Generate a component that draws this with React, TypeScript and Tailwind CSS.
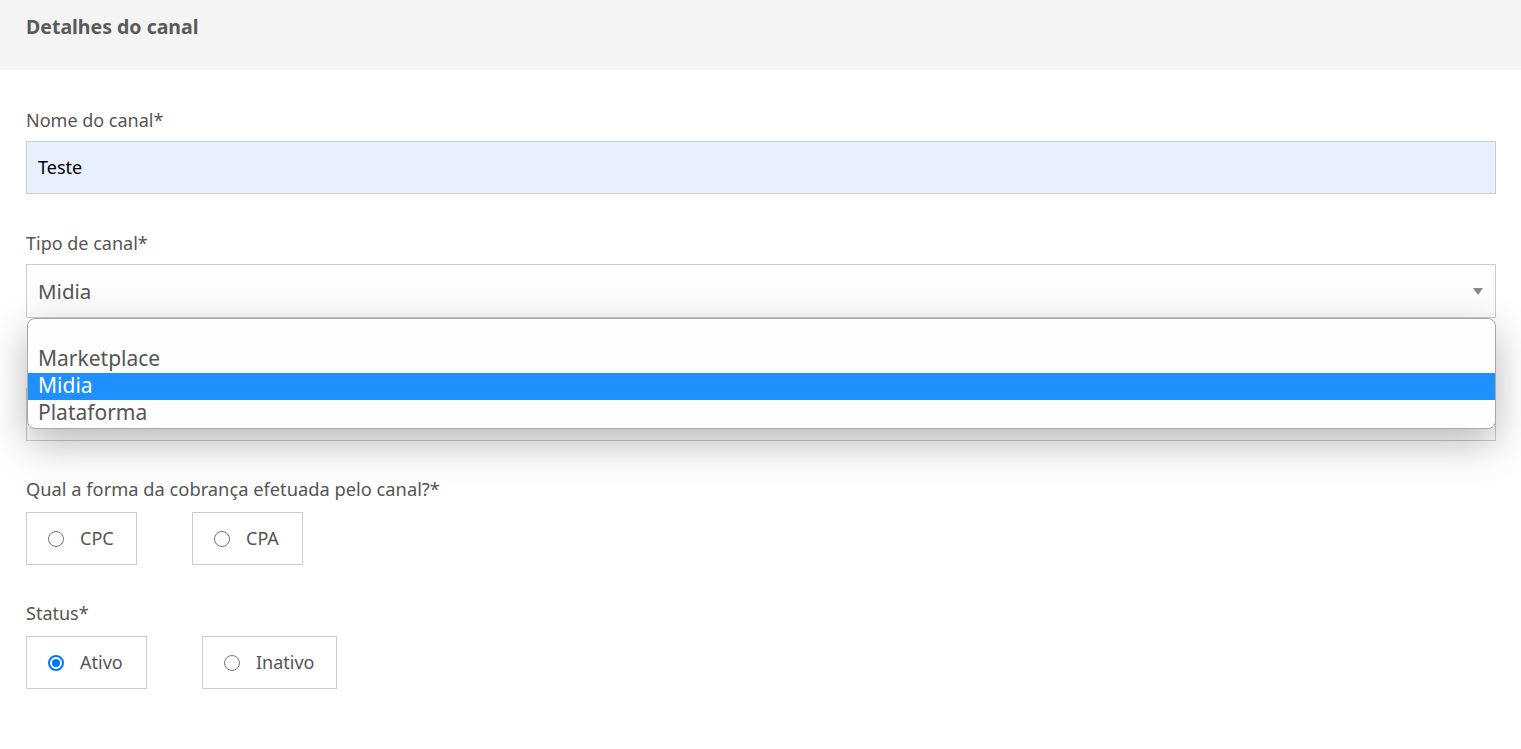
import { useState } from 'react';

const font = { fontFamily: '"Noto Sans", "Open Sans", sans-serif' };

function RadioBox({ label, checked, width }: { label: string; checked?: boolean; width: string }) {
    return (
        <label className={`flex h-[53px] items-center gap-[16px] border border-[#cccccc] pl-[21px] ${width}`}>
            <span
                className={`flex h-[16px] w-[16px] items-center justify-center rounded-full ${checked ? 'border-2 border-[#0075ff]' : 'border border-[#767676]'}`}
            >
                {checked && <span className="h-[8px] w-[8px] rounded-full bg-[#0075ff]" />}
            </span>
            <span className="text-[18px] text-[#555555]">{label}</span>
        </label>
    );
}

export default function App() {
    const [tipo] = useState('Midia');
    const options = ['', 'Marketplace', 'Midia', 'Plataforma'];

    return (
        <div className="min-h-[749px] w-full bg-white" style={font}>
            <div className="h-[70px] bg-[#f4f4f4] px-[26px] pt-[12px]">
                <h2 className="text-[19.5px] font-bold leading-[30px] text-[#5a5a5a]">Detalhes do canal</h2>
            </div>

            <div className="pl-[26px] pr-[25px] pt-[38px]">
                <p className="mb-[9px] text-[18px] leading-[24px] text-[#555555]">Nome do canal*</p>
                <div className="flex h-[53px] items-center border border-[#cccccc] bg-[#e8f0fe] px-[11px] text-[18px] text-black">
                    Teste
                </div>

                <p className="mb-[9px] mt-[37px] text-[18px] leading-[24px] text-[#555555]">Tipo de canal*</p>
                <div className="relative">
                    <div className="flex h-[54px] items-center justify-between border border-[#cccccc] bg-[#fdfdfd] pl-[11px] pr-[12px] text-[20.5px] text-[#555555]">
                        <span>{tipo}</span>
                        <span className="h-0 w-0 border-l-[5px] border-r-[5px] border-t-[7px] border-l-transparent border-r-transparent border-t-[#888888]" />
                    </div>

                    {/* campo seguinte, coberto pela lista aberta */}
                    <div className="pt-[70px]">
                        <div className="h-[53px] border border-[#cccccc] bg-white" />
                    </div>

                    <ul className="absolute left-[1px] right-0 top-[54px] z-10 h-[111px] rounded-[8px] border border-[#a8a8a8] bg-[#fefefe] text-[21px] leading-[24px] text-[#555555] shadow-[0_14px_40px_rgba(0,0,0,0.28)]">
                        {options.map((o, i) => (
                            <li
                                key={i}
                                className={`h-[27px] pl-[10px] ${o === tipo ? 'bg-[#1e90ff] text-white' : ''}`}
                            >
                                {o}
                            </li>
                        ))}
                    </ul>
                </div>

                <p className="mb-[11px] mt-[36px] text-[18.3px] leading-[24px] text-[#555555]">
                    Qual a forma da cobrança efetuada pelo canal?*
                </p>
                <div className="flex gap-[55px]">
                    <RadioBox label="CPC" width="w-[111px]" />
                    <RadioBox label="CPA" width="w-[111px]" />
                </div>

                <p className="mb-[11px] mt-[36px] text-[18px] leading-[24px] text-[#555555]">Status*</p>
                <div className="flex gap-[55px]">
                    <RadioBox label="Ativo" checked width="w-[121px]" />
                    <RadioBox label="Inativo" width="w-[135px]" />
                </div>
            </div>
        </div>
    );
}
